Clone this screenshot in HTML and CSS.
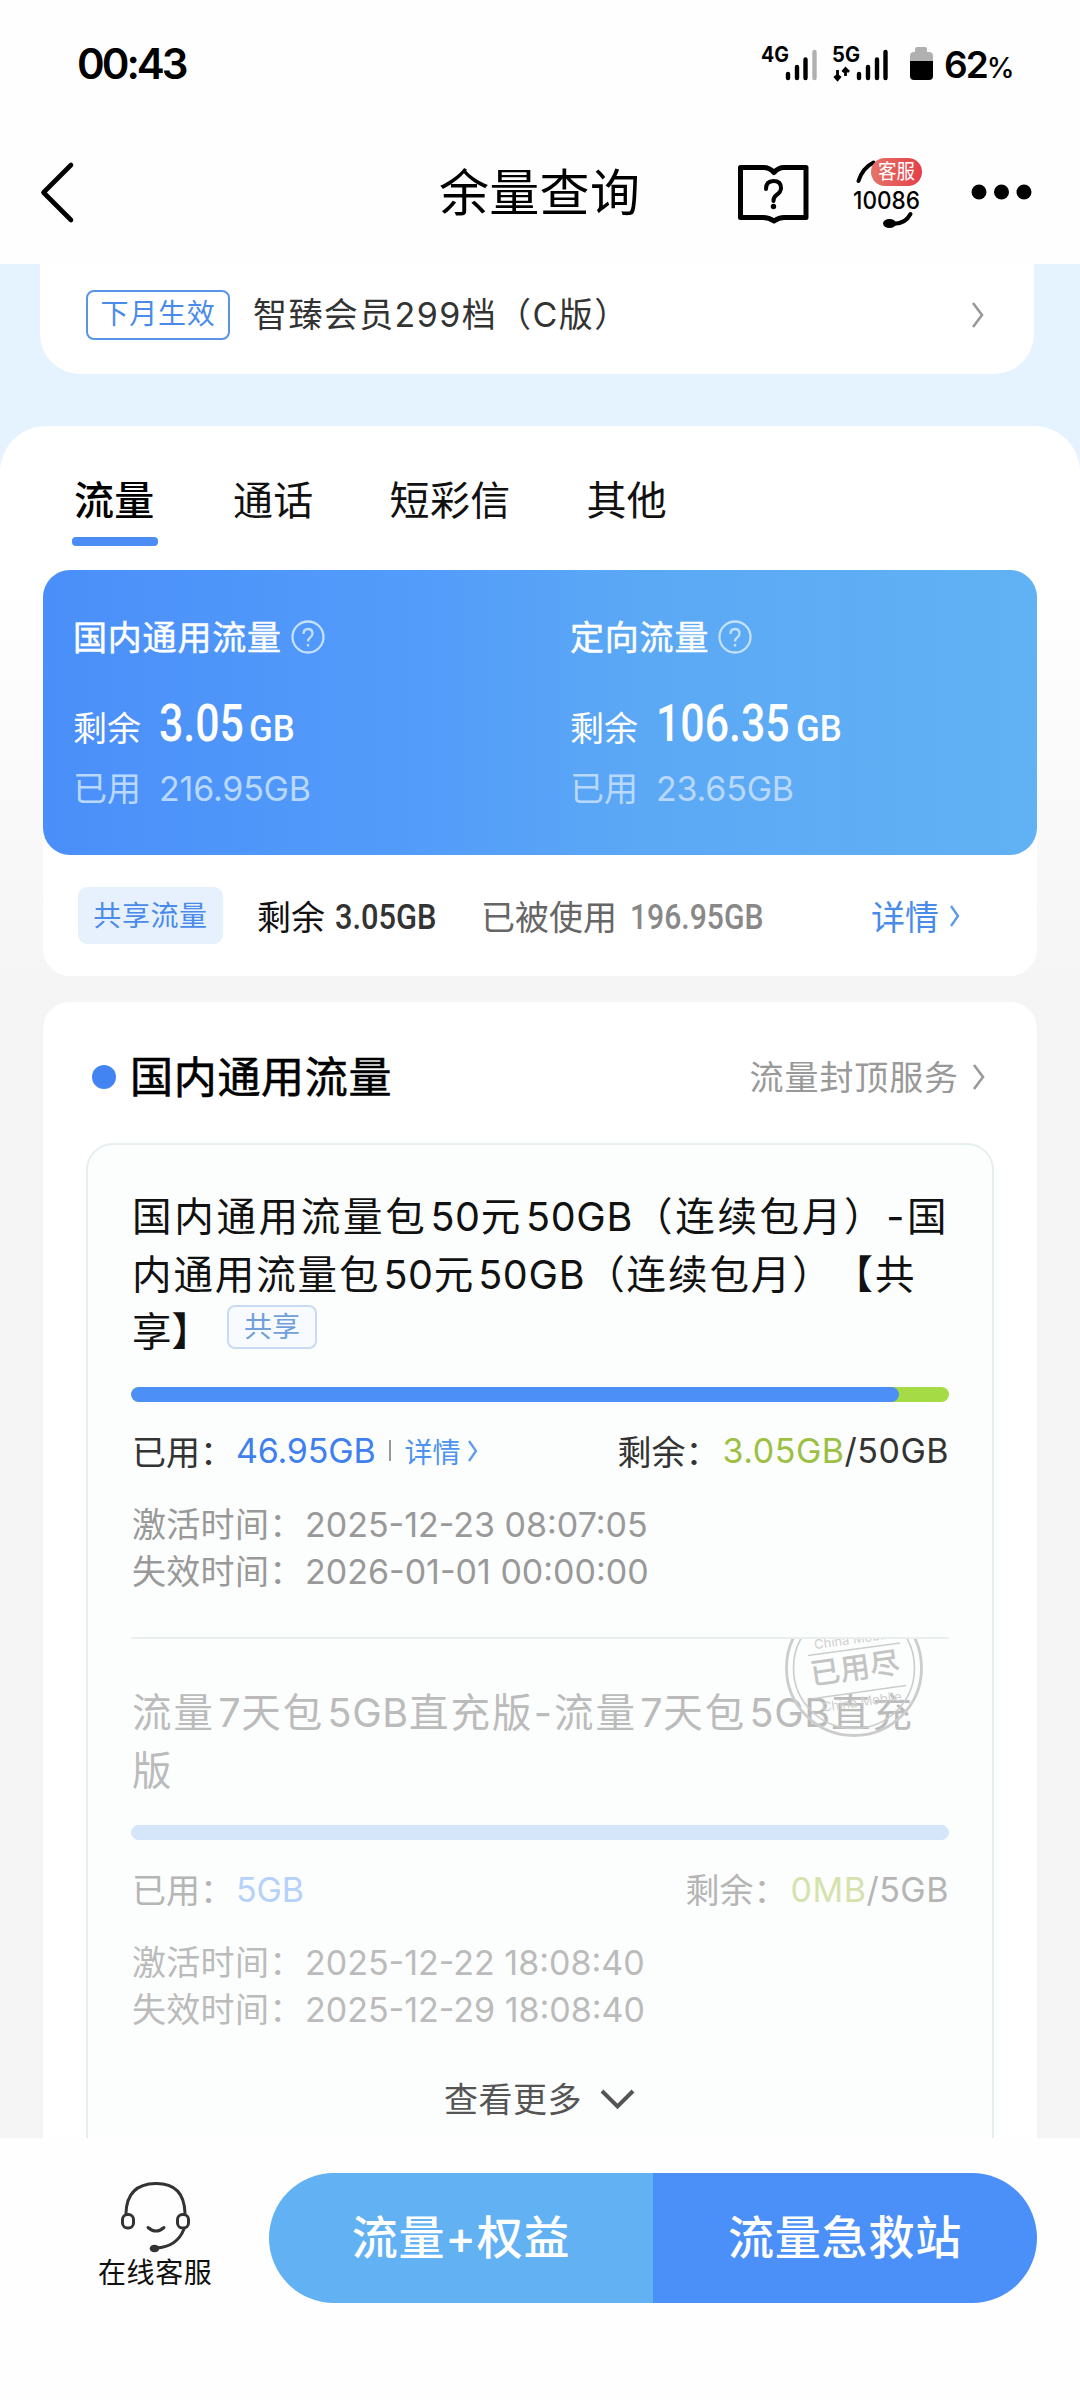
FILE: index.html
```html
<!DOCTYPE html>
<html lang="zh-CN">
<head>
<meta charset="utf-8">
<title>余量查询</title>
<link rel="stylesheet" href="styles.css">
</head>
<body>
<div class="screen">
  <header class="status">
    <span class="clock">00:43</span>
    <svg class="status-icons" width="176" height="44" viewBox="760 42 176 44">
      <g class="net"><text x="761" y="62" textLength="28" lengthAdjust="spacingAndGlyphs">4G</text><text x="832" y="62" textLength="28" lengthAdjust="spacingAndGlyphs">5G</text></g>
      <g stroke="#000" stroke-width="4.4" stroke-linecap="round">
        <path d="M788 74v4M797 67v11M805.500 59.500v18.500"/>
        <path d="M814.500 52v26" stroke="#b0b0b0"/>
        <path d="M859 74v4M868 67v11M877 59.500v18.500M885.500 52v26"/>
      </g>
      <path d="M837.500 70v8M834.500 76l3 3.500 3-3.500M845.500 76v-6.500M842.500 72l3-3.500 3.500 3.500" fill="none" stroke="#000" stroke-width="2.800"/>
      <path d="M915 52v-3q0-2 2-2h8q2 0 2 2v3h2q4 0 4 4v6h-23v-6q0-4 4-4z" fill="#b0b0b0"/>
      <path d="M910 61h23v15q0 4-4 4h-15q-4 0-4-4z" fill="#000"/>
    </svg>
    <span class="battery">62<small>%</small></span>
  </header>
  <nav class="nav">
    <svg class="back" width="36" height="64" viewBox="40 160 36 64"><path d="M71 165L43.500 192.500L71 220" fill="none" stroke="#000" stroke-width="4.600" stroke-linecap="round" stroke-linejoin="round"/></svg>
    <h1>余量查询</h1>
    <svg class="nav-icons" width="300" height="84" viewBox="736 150 300 84">
      <path d="M740.500 167.500h23q6 0 10.500 5q4.500-5 10-5h22v50h-22q-5 0-10 3.500q-5-3.500-11-3.500h-22.500z" fill="none" stroke="#000" stroke-width="5" stroke-linejoin="round"/>
      <path d="M766 189q0-8 7.500-8t7.500 7q0 4-4.500 7q-3 2-3 6" fill="none" stroke="#000" stroke-width="4" stroke-linecap="round"/>
      <circle cx="773.500" cy="206.500" r="2.700"/>
      <path d="M858.500 181q4-13 15-18.500" fill="none" stroke="#000" stroke-width="4" stroke-linecap="round"/>
      <path d="M910.500 214q-6 11-19 9.500" fill="none" stroke="#000" stroke-width="4" stroke-linecap="round"/>
      <ellipse cx="889.500" cy="223.500" rx="6.500" ry="4.500"/>
      <defs><linearGradient id="red"><stop offset="0" stop-color="#e47468"/><stop offset="1" stop-color="#e43f4a"/></linearGradient></defs>
      <rect x="871" y="158" width="51" height="28" rx="14" fill="url(#red)"/>
      <text class="badge" x="878" y="179" textLength="37" lengthAdjust="spacingAndGlyphs">客服</text>
      <text class="num" x="853" y="209" textLength="67" lengthAdjust="spacingAndGlyphs">10086</text>
      <circle cx="979" cy="192" r="7.500"/><circle cx="1001.500" cy="192" r="7.500"/><circle cx="1024" cy="192" r="7.500"/>
    </svg>
  </nav>

  <main class="content">
    <section class="plan">
      <span class="plan-tag">下月生效</span>
      <span class="plan-name">智臻会员299档（C版）</span>
      <svg class="plan-arrow" width="16" height="32" viewBox="0 0 16 32"><path d="M3 4l9 12-9 12" fill="none" stroke="#999" stroke-width="2.600"/></svg>
    </section>

    <section class="sheet">
      <div class="tabs">
        <span class="tab active">流量</span><span class="tab">通话</span><span class="tab">短彩信</span><span class="tab">其他</span>
      </div>

      <div class="summary">
        <div class="quota">
          <div class="col">
            <div class="q-title"><span>国内通用流量</span><svg width="36" height="36" viewBox="0 0 36 36"><circle cx="18" cy="18" r="15.500"/><path d="M13.500 15q0-5 4.500-5t4.500 4.500q0 2.500-2.500 4.200q-2 1.300-2 3.800M18 25v2.500"/></svg></div>
            <div class="q-left"><span>剩余</span><b class="din n1">3.05</b><i class="din u">GB</i></div>
            <div class="q-used"><span>已用</span><span class="val">216.95GB</span></div>
          </div>
          <div class="col">
            <div class="q-title"><span>定向流量</span><svg width="36" height="36" viewBox="0 0 36 36"><circle cx="18" cy="18" r="15.500"/><path d="M13.500 15q0-5 4.500-5t4.500 4.500q0 2.500-2.500 4.200q-2 1.300-2 3.800M18 25v2.500"/></svg></div>
            <div class="q-left"><span>剩余</span><b class="din n2">106.35</b><i class="din u">GB</i></div>
            <div class="q-used"><span>已用</span><span class="val">23.65GB</span></div>
          </div>
        </div>
        <div class="shared">
          <span class="shared-tag">共享流量</span>
          <span class="s-label">剩余</span><span class="din s-num">3.05GB</span>
          <span class="s-label grey">已被使用</span><span class="din s-num2">196.95GB</span>
          <span class="s-more">详情<svg width="14" height="26" viewBox="0 0 14 26"><path d="M3 3l7 10-7 10" fill="none" stroke="#5b96ee" stroke-width="2.300"/></svg></span>
        </div>
      </div>

      <div class="detail">
        <div class="d-head">
          <i class="dot"></i><h2>国内通用流量</h2>
          <span class="cap">流量封顶服务</span>
          <svg width="16" height="32" viewBox="0 0 16 32"><path d="M3 4l9 12-9 12" fill="none" stroke="#999" stroke-width="2.600"/></svg>
        </div>
        <div class="packs">
          <article class="pack">
            <h3><span class="l1">国内通用流量包<b>50</b>元<b>50GB</b>（连续包月）-国</span><br><span class="l2">内通用流量包<b>50</b>元<b>50GB</b>（连续包月）【共</span><br><span class="l3">享】</span><em>共享</em></h3>
            <div class="bar"><i style="width:93.9%"></i></div>
            <div class="usage">
              <span class="lab">已用：</span><span class="used">46.95GB</span><i class="sep"></i><span class="more">详情<svg width="14" height="28" viewBox="0 0 14 28"><path d="M3 4l7 10-7 10" fill="none" stroke="#5b9bf0" stroke-width="2.300"/></svg></span>
              <span class="rest"><span class="lab">剩余：</span><span class="left">3.05GB</span><span class="total">/50GB</span></span>
            </div>
            <div class="times">
              <div><span>激活时间：</span><span class="date">2025-12-23 08:07:05</span></div>
              <div><span>失效时间：</span><span class="date">2026-01-01 00:00:00</span></div>
            </div>
          </article>
          <article class="pack spent">
            <svg class="stamp" width="142" height="100" viewBox="783 1638 142 100">
              <g fill="none" stroke="#ccc"><circle cx="854" cy="1667" r="67.500" stroke-width="2.800"/><circle cx="854" cy="1667" r="60.500" stroke-width="1.600"/><path d="M808 1654.500l92-12.500M814 1697.500l92-13" stroke-width="1.600"/></g>
              <g transform="rotate(-8 854 1668)"><text class="big" x="810" y="1678">已用尽</text><text class="small" x="818" y="1643">China Mobile</text><text class="small" x="817" y="1706">China Mobile</text></g>
            </svg>
            <h3><span class="l4">流量<b>7</b>天包<b>5GB</b>直充版-流量<b>7</b>天包<b>5GB</b>直充</span><br><span class="l5">版</span></h3>
            <div class="bar"></div>
            <div class="usage">
              <span class="lab">已用：</span><span class="used">5GB</span>
              <span class="rest"><span class="lab">剩余：</span><span class="left">0MB</span><span class="total">/5GB</span></span>
            </div>
            <div class="times">
              <div><span>激活时间：</span><span class="date">2025-12-22 18:08:40</span></div>
              <div><span>失效时间：</span><span class="date">2025-12-29 18:08:40</span></div>
            </div>
          </article>
          <div class="expand"><span>查看更多</span><svg width="40" height="28" viewBox="0 0 40 28"><path d="M4 6l15.500 15.500L35 6" fill="none" stroke="#555" stroke-width="4"/></svg></div>
        </div>
      </div>
    </section>
  </main>

  <footer class="footer">
    <div class="service">
      <svg width="76" height="76" viewBox="118 2180 76 76">
        <g fill="none" stroke="#333" stroke-width="3" stroke-linecap="round">
          <path d="M126 2213q1-29 29.500-29.500T185 2213M184 2229q-7 18-28 19"/>
          <rect x="122.500" y="2214.500" width="11" height="13.500" rx="5"/><rect x="177.500" y="2214.500" width="11" height="13.500" rx="5"/>
          <path d="M148 2227.500q8 7 16 0"/>
        </g>
        <ellipse cx="154.500" cy="2248.500" rx="4.800" ry="3.800" fill="#333"/>
      </svg>
      <span>在线客服</span>
    </div>
    <div class="actions"><span class="a1">流量+权益</span><span class="a2">流量急救站</span></div>
  </footer>
</div>
</body>
</html>
```
FILE: styles.css
```css
* { box-sizing: border-box; }
body { margin: 0; }
.screen { width: 1080px; height: 2400px; display: flex; flex-direction: column; overflow: hidden; background: #fefefe; font-family: Inter, "Noto Sans CJK SC", sans-serif; color: #111; white-space: nowrap; text-spacing-trim: space-all; }
h1, h2, h3 { margin: 0; font-weight: 400; }
i, em { font-style: normal; }
svg { flex: none; display: block; }
.din { font-family: Roboto, "Liberation Sans", sans-serif; display: inline-block; transform-origin: 0 50%; }

.status { height: 120px; padding: 0 0 0 77px; display: flex; align-items: center; flex: none; color: #000; }
.clock { width: 683px; font-size: 42px; font-weight: 600; line-height: 60px; letter-spacing: -3px; padding-top: 8px; }
.status-icons { margin-top: 8px; }
.net text { font-size: 21px; font-weight: 700; }
.battery { margin: 8px 0 0 8px; font-size: 37px; font-weight: 600; letter-spacing: -2px; }
.battery small { font-size: 28px; font-weight: 500; letter-spacing: 0; }

.nav { height: 144px; padding: 0 0 0 40px; display: flex; align-items: center; flex: none; }
.nav h1 { width: 296px; margin-left: 363px; padding-top: 2px; font-size: 50px; line-height: 72px; letter-spacing: .3px; color: #000; }
.nav-icons { margin-left: 1px; }
.badge { font-size: 20px; fill: #fff; }
.num { font-size: 24px; font-weight: 500; }

.content { height: 1874px; overflow: hidden; flex: none; background: linear-gradient(#e5f2ff 0, #e5f2ff 170px, #f5f5f5 500px); }
.plan { height: 110px; margin: 0 46px 0 40px; padding: 0 48px 9px 46px; display: flex; align-items: center; background: #fff; border-radius: 0 0 40px 40px; }
.plan-tag { width: 144px; height: 50px; border: 2px solid #5a94e6; border-radius: 8px; color: #4a8bea; font-size: 28px; line-height: 44px; letter-spacing: .8px; text-align: center; }
.plan-name { margin-left: 23px; padding-bottom: 4px; font-size: 34px; letter-spacing: 1.4px; color: #333; }
.plan-arrow { margin-left: auto; }

.sheet { margin-top: 52px; border-radius: 46px 46px 0 0; background: linear-gradient(#fff 0, #fff 150px, #f5f5f5 560px); }
.tabs { height: 144px; padding: 48px 0 0 74px; display: flex; gap: 76px; }
.tab { height: 72px; font-size: 40px; line-height: 54px; letter-spacing: .3px; color: #111; }
.tab.active { margin: 0 -2px 0 -2px; padding: 0 3px 0 2px; font-weight: 500; color: #000; display: flex; flex-direction: column; justify-content: space-between; }
.tab.active::after { content: ""; height: 9px; width: 86px; margin: 0 -2px; border-radius: 4px; background: #4b8df5; }

.summary { margin: 0 43px; background: #fff; border-radius: 27px; height: 406px; }
.quota { height: 285px; border-radius: 27px; display: grid; grid-template-columns: 497px 1fr; background: linear-gradient(90deg, #4a8ff9, #539cfa 38%, #5ba8f5 60%, #61b2f4); color: #fff; }
.col { padding: 44px 0 0 30px; }
.q-title { height: 46px; display: flex; align-items: center; gap: 8px; font-size: 34px; letter-spacing: .8px; -webkit-text-stroke: .5px; }
.q-title span { padding-bottom: 4px; }
.q-title svg { fill: none; stroke: #c3e0ff; stroke-width: 2.3; }
.q-left { height: 60px; margin-top: 34px; display: flex; align-items: baseline; line-height: 60px; font-size: 34px; }
.q-left span { width: 86px; }
.q-left b { font-size: 51px; font-weight: 500; transform: scaleX(.84); }
.n1 { width: 90px; }
.n2 { width: 140px; }
.u { font-size: 37px; font-weight: 500; transform: scaleX(.94); }
.q-used { height: 44px; margin-top: 13px; display: flex; line-height: 44px; font-size: 34px; color: #b9d8fd; }
.q-used span:first-child { width: 86px; }
.val { letter-spacing: -.2px; }
.shared { height: 121px; padding: 0 0 0 35px; display: flex; align-items: center; font-size: 34px; color: #111; }
.shared-tag { width: 145px; height: 57px; border-radius: 9px; background: #e7f1fe; color: #4a8bea; font-size: 28px; line-height: 58px; letter-spacing: .6px; text-align: center; margin-right: 34px; }
.s-label { width: 78px; padding-bottom: 1px; }
.s-num { width: 146px; font-size: 35px; font-weight: 500; color: #333; transform: scaleX(.88); }
.grey { width: 149px; color: #666; }
.s-num2 { width: 241px; font-size: 35px; font-weight: 500; color: #888; transform: scaleX(.86); }
.s-num, .s-num2 { padding-top: 3px; }
.s-more { color: #4a8bea; display: flex; align-items: center; gap: 9px; }

.detail { margin: 26px 43px 0; padding: 0 43px; background: #fff; border-radius: 27px 27px 0 0; }
.d-head { height: 141px; padding-top: 9px; display: flex; align-items: center; padding-right: 7px; }
.dot { width: 24px; height: 24px; margin-left: 6px; border-radius: 50%; background: #4384f3; }
.d-head h2 { margin: 0 auto 0 14px; padding-bottom: 7px; font-size: 43px; -webkit-text-stroke: .6px; letter-spacing: .7px; color: #000; }
.cap { padding-bottom: 3px; font-size: 34px; letter-spacing: .9px; color: #999; margin-right: 12px; }
.packs { height: 1100px; border: 2px solid #e6eef0; border-radius: 27px 27px 0 0; background: #fcfefd; padding: 0 43px; }
.pack { height: 494px; padding-top: 44px; border-bottom: 2px solid #e9eeee; }
.pack h3 { font-size: 39.500px; line-height: 57.500px; color: #111; }
.pack h3 span { margin-left: 1px; }
.pack h3 b { font-weight: 400; letter-spacing: .7px; margin-left: 3px; }
.l1 { letter-spacing: 2.7px; }
.l2 { letter-spacing: 1.9px; }
.pack em { display: inline-block; vertical-align: 3px; position: relative; top: -6px; width: 90px; height: 44px; margin-left: 16px; border: 2px solid #c9dbf0; border-radius: 8px; background: #f7fafe; color: #709fd9; font-size: 28px; line-height: 40px; text-align: center; }
.bar { height: 15px; margin-top: 25px; border-radius: 8px; background: #a5dc45; overflow: hidden; }
.bar i { display: block; height: 15px; border-radius: 8px; background: #4b8ff7; }
.usage { height: 50px; margin-top: 24px; display: flex; align-items: center; font-size: 34px; color: #333; letter-spacing: -.2px; }
.lab { width: 105px; padding: 0 0 1px 1px; letter-spacing: 0; }
.used { color: #3f7fee; }
.sep { width: 2px; height: 21px; margin: 0 13px 0 14px; background: #999; }
.more { display: flex; align-items: center; gap: 6px; font-size: 28px; letter-spacing: 0; color: #4f93ee; }
.rest { display: flex; align-items: center; margin-left: auto; letter-spacing: .5px; }
.rest .lab { width: 106px; }
.left { color: #9cc044; }
.times { margin-top: 25px; font-size: 34px; line-height: 47px; color: #999; }
.times div { display: flex; padding-left: 1px; }
.times div > span:first-child { width: 173px; letter-spacing: .3px; }
.date { letter-spacing: 0; }
.spent { position: relative; height: auto; border: 0; }
.spent h3 { margin-top: 2px; color: #bbb; }
.l4 { letter-spacing: 2.1px; }
.spent .bar { background: #d5e5fa; }
.spent .usage { color: #b5b5b5; }
.spent .used { color: #b6d2fa; }
.spent .left { color: #d5e2ad; }
.spent .times { color: #bbb; }
.stamp { position: absolute; left: 652px; top: 0; font-family: Inter, "Noto Sans CJK SC", sans-serif; fill: #c4c4c4; }
.big { font-size: 30px; font-weight: 500; }
.small { font-size: 13px; fill: #d0d0d0; }
.expand { margin-top: 41px; height: 50px; padding-left: 2px; display: flex; justify-content: center; align-items: center; gap: 16px; font-size: 34px; letter-spacing: .5px; color: #555; }
.expand span { padding-bottom: 3px; }

.footer { height: 262px; padding: 35px 43px 0 98px; display: flex; background: #fefefe; flex: none; }
.service { width: 171px; padding-top: 7px; }
.service svg { margin-left: 20px; }
.service span { display: block; font-size: 28px; line-height: 34px; letter-spacing: .6px; color: #111; }
.actions { width: 768px; height: 130px; display: grid; grid-template-columns: 1fr 1fr; border-radius: 65px; overflow: hidden; font-size: 46px; font-weight: 500; line-height: 128px; letter-spacing: .8px; text-align: center; color: #fff; }
.a1 { background: #61b1f3; }
.a2 { background: #4b90f8; }
```
